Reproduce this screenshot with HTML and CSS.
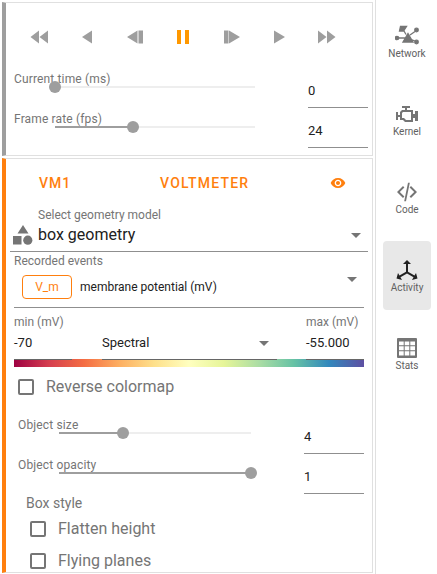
FILE: index.html
```html
<!DOCTYPE html>
<html lang="en">
<head>
<meta charset="utf-8">
<title>Activity</title>
<link rel="stylesheet" href="styles.css">
</head>
<body>
<div class="app">
  <main class="panel">
    <section class="card card-player">
      <div class="transport">
        <button class="tbtn"><svg viewBox="0 0 24 24"><path d="M12 5.500v13L3.500 12zM21 5.500v13L12.500 12z"/></svg></button>
        <button class="tbtn"><svg viewBox="0 0 24 24"><path d="M17 5.500v13L7 12z"/></svg></button>
        <button class="tbtn"><svg viewBox="0 0 24 24"><path d="M14.500 5.500v13L4 12zM15.500 5.500H20v13h-4.500z"/></svg></button>
        <button class="tbtn on"><svg viewBox="0 0 24 24"><path d="M6 5h4v14H6zM14 5h4v14h-4z"/></svg></button>
        <button class="tbtn"><svg viewBox="0 0 24 24"><path d="M10 5.500v13L21 12zM5 5.500h4.500v13H5z"/></svg></button>
        <button class="tbtn"><svg viewBox="0 0 24 24"><path d="M7 5.500v13L18 12z"/></svg></button>
        <button class="tbtn"><svg viewBox="0 0 24 24"><path d="M3 5.500v13L11.500 12zM12 5.500v13L20.500 12z"/></svg></button>
      </div>
      <div class="srow">
        <div class="slider">
          <label class="slabel">Current time (ms)</label>
          <div class="track"><span class="thumb" style="left:0%"></span></div>
        </div>
        <div class="num">0</div>
      </div>
      <div class="srow">
        <div class="slider">
          <label class="slabel">Frame rate (fps)</label>
          <div class="track"><span class="fill" style="width:39%"></span><span class="thumb" style="left:39%"></span></div>
        </div>
        <div class="num">24</div>
      </div>
    </section>

    <section class="card card-vm">
      <header class="vmhead">
        <span class="vmname">VM1</span>
        <span class="vmtype">VOLTMETER</span>
        <svg class="eye" viewBox="0 0 24 24"><path d="M12 4.500C7 4.500 2.730 7.610 1 12c1.730 4.390 6 7.500 11 7.500s9.270-3.110 11-7.500c-1.730-4.390-6-7.500-11-7.500zM12 17c-2.760 0-5-2.240-5-5s2.240-5 5-5 5 2.240 5 5-2.240 5-5 5zm0-8c-1.660 0-3 1.340-3 3s1.340 3 3 3 3-1.340 3-3-1.340-3-3-3z"/></svg>
      </header>
      <div class="geom">
        <svg class="shapes" viewBox="0 0 20 20"><path d="M10 0l5.500 8.500h-11zM0 11h8.500v8.500H0z"/><circle cx="14.800" cy="15.200" r="4.600"/></svg>
        <div class="geomsel">
          <div class="smalllabel">Select geometry model</div>
          <div class="geomval"><span>box geometry</span><i class="caret"></i></div>
        </div>
      </div>
      <div class="events">
        <div class="smalllabel">Recorded events</div>
        <div class="evrow">
          <span class="chip">V_m</span>
          <span class="evtext">membrane potential (mV)</span>
          <i class="caret caret-ev"></i>
        </div>
      </div>
      <div class="cmap">
        <div class="cfield cmin"><div class="smalllabel">min (mV)</div><div class="cval">-70</div></div>
        <div class="cfield cmid"><div class="cval cselect"><span>Spectral</span><i class="caret"></i></div></div>
        <div class="cfield cmax"><div class="smalllabel">max (mV)</div><div class="cval">-55.000</div></div>
      </div>
      <div class="colorbar"></div>
      <label class="check check-rev"><span class="box"></span><span>Reverse colormap</span></label>
      <div class="srow srow-obj first">
        <div class="slider">
          <label class="slabel">Object size</label>
          <div class="track"><span class="fill" style="width:33.300%"></span><span class="thumb" style="left:33.300%"></span></div>
        </div>
        <div class="num">4</div>
      </div>
      <div class="srow srow-obj">
        <div class="slider">
          <label class="slabel">Object opacity</label>
          <div class="track"><span class="fill" style="width:100%"></span><span class="thumb" style="left:100%"></span></div>
        </div>
        <div class="num">1</div>
      </div>
      <div class="boxstyle">Box style</div>
      <label class="check check-a"><span class="box"></span><span>Flatten height</span></label>
      <label class="check check-b"><span class="box"></span><span>Flying planes</span></label>
    </section>
  </main>

  <nav class="side">
    <a class="tab"><svg viewBox="0 0 24 24" fill="none" stroke="#757575" stroke-width="1.300"><path d="M5.500 2.500h6l-3 4.500h-4zM13 9.500l5 8.500H8zM3.800 14H10M15 11l5-3.500M16.500 15.500l3.300 1.500M9 7l2 3.500"/><circle cx="2" cy="14" r="1.700"/><circle cx="21.500" cy="6" r="1.800"/><circle cx="21.500" cy="18" r="1.800"/></svg><span>Network</span></a>
    <a class="tab"><svg viewBox="0 0 24 24"><path d="M8,10H16V18H11L9,16H7V11M7,4V6H10V8H7L5,10V13H3V10H1V18H3V15H5V18H8L10,20H18V16H20V19H23V9H20V12H18V8H12V6H15V4H7Z"/></svg><span>Kernel</span></a>
    <a class="tab"><svg viewBox="0 0 24 24"><path d="M9.400 16.600L4.800 12l4.600-4.600L8 6l-6 6 6 6 1.400-1.400zm5.200 0l4.600-4.600-4.600-4.600L16 6l6 6-6 6-1.400-1.400zM13 2.800h1.800L11 21.200H9.200z"/></svg><span>Code</span></a>
    <a class="tab active"><svg viewBox="0 0 24 24"><path d="M12,2L16,6H13V13.850L19.530,17.610L21,15.030L22.500,20.500L17,21.960L18.530,19.350L12,15.580L5.470,19.350L7,21.960L1.500,20.500L3,15.030L4.470,17.610L11,13.850V6H8L12,2Z"/></svg><span>Activity</span></a>
    <a class="tab"><svg viewBox="0 0 24 24"><path fill-rule="evenodd" d="M3 2h18a1 1 0 0 1 1 1v18a1 1 0 0 1-1 1H3a1 1 0 0 1-1-1V3a1 1 0 0 1 1-1zM4 5.500v3.800h4.700V5.500zM9.700 5.500v3.800h4.600V5.500zM15.300 5.500v3.800H20V5.500zM4 10.300v4h4.700v-4zM9.700 10.300v4h4.600v-4zM15.300 10.300v4H20v-4zM4 15.300v4.200h4.700v-4.200zM9.700 15.300v4.200h4.600v-4.200zM15.300 15.300v4.200H20v-4.200z"/></svg><span>Stats</span></a>
  </nav>
</div>
</body>
</html>
```
FILE: styles.css
```css
* { box-sizing: border-box; }
html, body { margin: 0; height: 100%; overflow: hidden; background: #fff; }
body { font-family: Roboto, "Liberation Sans", sans-serif; color: #212121; }

.app { display: flex; width: 437px; height: 574px; overflow: hidden; }
.panel { width: 373px; flex: none; margin-left: 2px; padding-top: 2px; padding-right: 2px; display: flex; flex-direction: column; gap: 2px; }
.card { border: 1px solid #e0e0e0; border-left: 4px solid #9e9e9e; flex: none; }
.card-player { height: 154px; padding-top: 16px; }
.card-vm { height: 415px; border-left-color: #ff7f0e; padding-top: 14px; }

.transport { display: flex; padding-left: 9px; }
.tbtn { width: 48px; height: 36px; padding: 0; border: 0; background: none; display: flex; align-items: center; justify-content: center; }
.tbtn svg { width: 24px; height: 24px; fill: #9e9e9e; }
.tbtn.on svg { fill: #ff9800; }

.srow { display: flex; align-items: flex-start; height: 40px; padding-left: 8px; }
.card-player .srow:nth-child(2) { margin-top: 15px; }
.slider { width: 241px; flex: none; }
.slabel { display: block; font-size: 12px; letter-spacing: .15px; line-height: 16px; color: #757575; height: 16px; margin-top: 1px; }
.track { position: relative; height: 2px; margin-top: -1px; margin-left: 41px; width: 200px; background: #eee; }
.fill { position: absolute; left: 0; top: 0; height: 2px; background: #9e9e9e; }
.thumb { position: absolute; top: -5px; width: 12px; height: 12px; margin-left: -6px; border-radius: 50%; background: #9e9e9e; }
.num { margin-left: 53px; width: 60px; height: 38px; padding-top: 9px; font-size: 13px; line-height: 24px; color: #212121; border-bottom: 1px solid #8f8f8f; flex: none; }

.vmhead { display: flex; align-items: center; height: 20px; font-size: 14px; font-weight: 500; letter-spacing: 1px; color: #ff7f0e; }
.vmname { margin-left: 33px; width: 121px; }
.vmtype { width: 170px; letter-spacing: 1.2px; }
.eye { width: 16px; height: 16px; fill: #ff7f0e; }

.geom { display: flex; align-items: flex-end; margin-top: 13px; margin-left: 4px; width: 358px; border-bottom: 1px solid #8f8f8f; height: 46px; padding-bottom: 6px; }
.shapes { width: 20px; height: 20px; fill: #757575; flex: none; margin-left: 3px; margin-right: 5px; }
.geomsel { flex: 1; align-self: flex-start; margin-top: 2px; }
.smalllabel { font-size: 12px; line-height: 14px; color: #757575; }
.geomval { display: flex; align-items: center; justify-content: space-between; font-size: 16px; line-height: 24px; padding-right: 7px; margin-top: 1px; color: #212121; }
.caret { display: block; width: 0; height: 0; border-left: 5px solid transparent; border-right: 5px solid transparent; border-top: 5px solid #757575; }

.events { margin-left: 8px; width: 350px; height: 56px; border-bottom: 1px solid #8f8f8f; padding-top: 2px; }
.evrow { display: flex; align-items: flex-start; margin-top: 7px; margin-left: 8px; }
.chip { width: 50px; height: 24px; border: 1px solid #ff7f0e; border-radius: 4px; color: #ff7f0e; font-size: 12px; line-height: 22px; text-align: center; }
.evtext { margin-left: 8px; font-size: 12px; line-height: 24px; color: #212121; }
.caret-ev { margin-left: auto; margin-right: 7px; margin-top: 2px; }

.cmap { display: flex; margin-left: 8px; width: 350px; height: 52px; padding-top: 7px; }
.cmin { width: 58px; }
.cmid { width: 175px; margin-left: 30px; padding-top: 14px; }
.cmax { width: 58px; margin-left: 29px; }
.cfield { border-bottom: 1px solid #666; position: relative; z-index: 1; }
.cval { font-size: 13px; line-height: 20px; margin-top: 4px; color: #212121; }
.cselect { display: flex; align-items: center; justify-content: space-between; padding-right: 8px; }
.colorbar { margin-left: 8px; width: 350px; height: 8px; margin-top: -1px; background: linear-gradient(to right, #9e0142, #d53e4f, #f46d43, #fdae61, #fee08b, #ffffbf, #e6f598, #abdda4, #66c2a5, #3288bd, #5e4fa2); }

.check { display: flex; align-items: center; font-size: 16px; line-height: 20px; color: #757575; }
.box { width: 16px; height: 16px; border: 2px solid #757575; border-radius: 2px; flex: none; margin-right: 12px; }
.check-rev { margin-left: 12px; margin-top: 10px; }
.srow-obj { padding-left: 12px; }
.srow-obj.first { margin-top: 19px; }
.srow-obj .track { width: 192px; margin-left: 41px; }
.srow-obj .slider { width: 233px; }
.srow-obj .num { margin-left: 53px; }
.boxstyle { margin-left: 20px; margin-top: -3px; font-size: 14px; line-height: 20px; color: #757575; }
.check-a { margin-left: 24px; margin-top: 6px; }
.check-b { margin-left: 24px; margin-top: 12px; }

.side { flex: 1; border-left: 1px solid #e0e0e0; padding-top: 7px; padding-left: 7px; display: flex; flex-direction: column; gap: 9px; }
.tab { width: 48px; height: 69px; border-radius: 4px; display: flex; flex-direction: column; align-items: center; justify-content: center; font-size: 10px; line-height: 12px; color: #616161; }
.tab svg { width: 24px; height: 24px; fill: #757575; }
.tab.active { background: #e8e8e8; }
.tab.active svg { fill: #212121; }
```
